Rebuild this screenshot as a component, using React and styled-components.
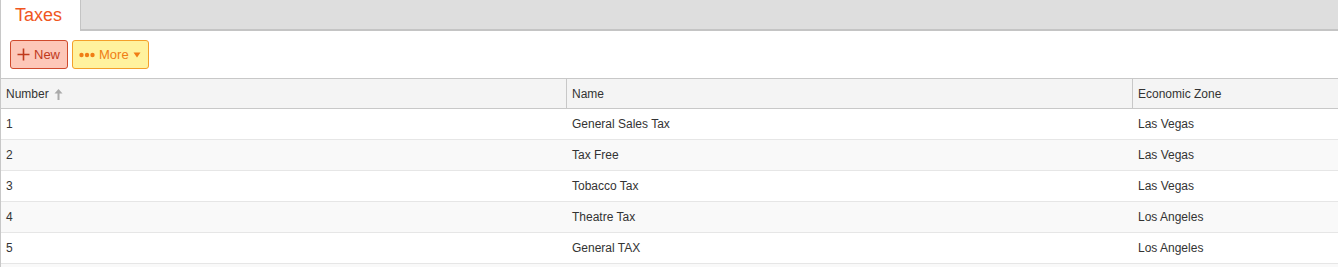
import React from "react";
import styled, { createGlobalStyle } from "styled-components";

const Global = createGlobalStyle`
  html, body { margin: 0; padding: 0; background: #fff; }
  body { font-family: "Liberation Sans", Arial, sans-serif; font-size: 12px; color: #333; }
`;

const Page = styled.div`
  width: 1338px;
  height: 267px;
  overflow: hidden;
  border-left: 1px solid #c8c8c8;
  box-sizing: border-box;
`;

const TabBar = styled.div`
  display: flex;
  height: 29px;
  background: #dedede;
  border-bottom: 2px solid #c4c4c4;
  box-sizing: content-box;
`;

const Tab = styled.div`
  width: 80px;
  background: #fff;
  border-right: 1px solid #c4c4c4;
  margin-bottom: -2px;
  display: flex;
  align-items: center;
  padding-left: 14px;
  box-sizing: border-box;
  color: #f0561e;
  font-size: 18px;
  height: 31px;
`;

const Toolbar = styled.div`
  display: flex;
  gap: 4px;
  padding: 9px;
`;

const Button = styled.button`
  display: flex;
  align-items: center;
  gap: 4px;
  height: 29px;
  padding: 0 7px 0 6px;
  border-radius: 3px;
  font-family: "Liberation Sans", Arial, sans-serif;
  font-size: 13px;
  box-sizing: border-box;
  cursor: pointer;
  background: ${p => (p.$variant === "new" ? "#fdc7b8" : "#fff29e")};
  border: 1px solid ${p => (p.$variant === "new" ? "#cf4a2c" : "#f4a02a")};
  color: ${p => (p.$variant === "new" ? "#c0391b" : "#f07d14")};
`;

const Table = styled.div`
  border-top: 1px solid #c8c8c8;
`;

const Row = styled.div`
  display: grid;
  grid-template-columns: 566px 566px 1fr;
  height: ${p => (p.$head ? "30px" : "31px")};
  box-sizing: border-box;
  border-bottom: 1px solid ${p => (p.$head ? "#c8c8c8" : "#e6e6e6")};
  background: ${p => (p.$head ? "#f4f4f4" : p.$alt ? "#f9f9f9" : "#fff")};
`;

const Cell = styled.div`
  display: flex;
  align-items: center;
  padding-left: 5px;
  gap: 5px;
  color: #333;
  border-right: ${p => (p.$head && !p.$last ? "1px solid #c8c8c8" : "none")};
`;

const SortArrow = () => (
  <svg width="9" height="12" viewBox="0 0 9 12">
    <path d="M4.5 1 L8.5 5.5 L5.5 5.5 L5.5 12 L3.5 12 L3.5 5.5 L0.5 5.5 Z" fill="#aaa" />
  </svg>
);

const PlusIcon = () => (
  <svg width="13" height="13" viewBox="0 0 13 13">
    <path d="M6.5 0.5 V12.5 M0.5 6.5 H12.5" stroke="#c0391b" strokeWidth="1.6" />
  </svg>
);

const DotsIcon = () => (
  <svg width="16" height="6" viewBox="0 0 16 6">
    <circle cx="2.5" cy="3" r="2.2" fill="#f07d14" />
    <circle cx="8" cy="3" r="2.2" fill="#f07d14" />
    <circle cx="13.5" cy="3" r="2.2" fill="#f07d14" />
  </svg>
);

const Caret = () => (
  <svg width="8" height="6" viewBox="0 0 8 6">
    <path d="M0.5 0.5 L7.5 0.5 L4 5.5 Z" fill="#f07d14" />
  </svg>
);

const rows = [
  ["1", "General Sales Tax", "Las Vegas"],
  ["2", "Tax Free", "Las Vegas"],
  ["3", "Tobacco Tax", "Las Vegas"],
  ["4", "Theatre Tax", "Los Angeles"],
  ["5", "General TAX", "Los Angeles"],
];

export default function App() {
  return (
    <>
      <Global />
      <Page>
        <TabBar>
          <Tab>Taxes</Tab>
        </TabBar>
        <Toolbar>
          <Button $variant="new"><PlusIcon />New</Button>
          <Button $variant="more"><DotsIcon />More <Caret /></Button>
        </Toolbar>
        <Table>
          <Row $head>
            <Cell $head>Number <SortArrow /></Cell>
            <Cell $head>Name</Cell>
            <Cell $head $last>Economic Zone</Cell>
          </Row>
          {rows.map((r, i) => (
            <Row key={r[0]} $alt={i % 2 === 1}>
              <Cell>{r[0]}</Cell>
              <Cell>{r[1]}</Cell>
              <Cell>{r[2]}</Cell>
            </Row>
          ))}
          <Row $alt />
        </Table>
      </Page>
    </>
  );
}
